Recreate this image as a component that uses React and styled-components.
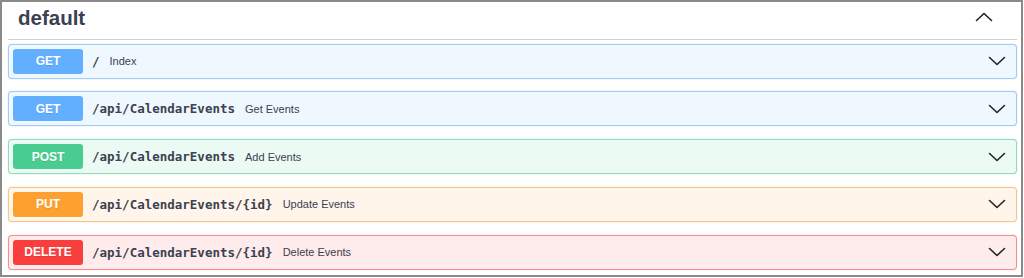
import styled, { createGlobalStyle } from "styled-components";

const GlobalStyle = createGlobalStyle`
  html, body {
    margin: 0;
    padding: 0;
    background: #ffffff;
  }
  body {
    font-family: "Liberation Sans", Arial, sans-serif;
    color: #3b4151;
  }
`;

const METHODS = {
  GET: { color: "#61affe", border: "rgba(97, 175, 254, 0.6)", bg: "rgba(97, 175, 254, 0.1)" },
  POST: { color: "#49cc90", border: "rgba(73, 204, 144, 0.6)", bg: "rgba(73, 204, 144, 0.1)" },
  PUT: { color: "#fca130", border: "rgba(252, 161, 48, 0.6)", bg: "rgba(252, 161, 48, 0.1)" },
  DELETE: { color: "#f93e3e", border: "rgba(249, 62, 62, 0.55)", bg: "rgba(249, 62, 62, 0.1)" },
};

const operations = [
  { method: "GET", path: "/", summary: "Index" },
  { method: "GET", path: "/api/CalendarEvents", summary: "Get Events" },
  { method: "POST", path: "/api/CalendarEvents", summary: "Add Events" },
  { method: "PUT", path: "/api/CalendarEvents/{id}", summary: "Update Events" },
  { method: "DELETE", path: "/api/CalendarEvents/{id}", summary: "Delete Events" },
];

const Frame = styled.div`
  box-sizing: border-box;
  width: 1023px;
  height: 277px;
  border: 2px solid #8a8a8a;
  padding: 0 4px 0 6px;
`;

const TagHeader = styled.div`
  display: flex;
  align-items: center;
  justify-content: space-between;
  height: 37px;
  border-bottom: 1px solid rgba(59, 65, 81, 0.25);
  padding: 0 24px 0 10px;
`;

const Title = styled.h3`
  margin: 0 0 5px;
  font-size: 20.5px;
  line-height: 1;
  font-weight: 700;
  color: #3b4151;
`;

const ArrowButton = styled.button`
  display: flex;
  align-items: center;
  border: none;
  background: none;
  padding: 0;
  margin-bottom: 8px;
  cursor: pointer;
`;

const OpList = styled.div`
  display: flex;
  flex-direction: column;
  gap: 12.75px;
  padding-top: 3.5px;
`;

const OpBlock = styled.div`
  box-sizing: border-box;
  height: 35px;
  display: flex;
  align-items: center;
  padding: 4px 10px 4px 4px;
  border: 1px solid ${(p) => METHODS[p.$method].border};
  border-radius: 4px;
  background: ${(p) => METHODS[p.$method].bg};
  box-shadow: 0 0 2px rgba(0, 0, 0, 0.12);
`;

const Badge = styled.span`
  flex: none;
  width: 70px;
  height: 25px;
  display: flex;
  align-items: center;
  justify-content: center;
  border-radius: 3px;
  background: ${(p) => METHODS[p.$method].color};
  color: #ffffff;
  font-size: 12px;
  font-weight: 700;
  text-shadow: 0 1px 0 rgba(0, 0, 0, 0.1);
`;

const Path = styled.span`
  margin-left: 9px;
  font-family: "DejaVu Sans Mono", "Liberation Mono", monospace;
  font-weight: 700;
  font-size: 12.5px;
  color: #3b4151;
`;

const Summary = styled.span`
  flex: 1;
  margin-left: 10px;
  font-size: 11px;
  color: #3b4151;
`;

const Chevron = ({ up }) => (
  <svg width="18" height="10" viewBox="0 0 18 10" fill="none">
    <polyline
      points={up ? "1.5,8.5 9,1.5 16.5,8.5" : "1.5,1.5 9,8.5 16.5,1.5"}
      stroke="#222"
      strokeWidth="1.6"
      strokeLinecap="round"
      strokeLinejoin="round"
    />
  </svg>
);

const App = () => {
  return (
    <>
      <GlobalStyle />
      <Frame>
        <TagHeader>
          <Title>default</Title>
          <ArrowButton>
            <Chevron up />
          </ArrowButton>
        </TagHeader>
        <OpList>
          {operations.map((op, i) => (
            <OpBlock key={i} $method={op.method}>
              <Badge $method={op.method}>{op.method}</Badge>
              <Path>{op.path}</Path>
              <Summary>{op.summary}</Summary>
              <Chevron />
            </OpBlock>
          ))}
        </OpList>
      </Frame>
    </>
  );
};

export default App;
